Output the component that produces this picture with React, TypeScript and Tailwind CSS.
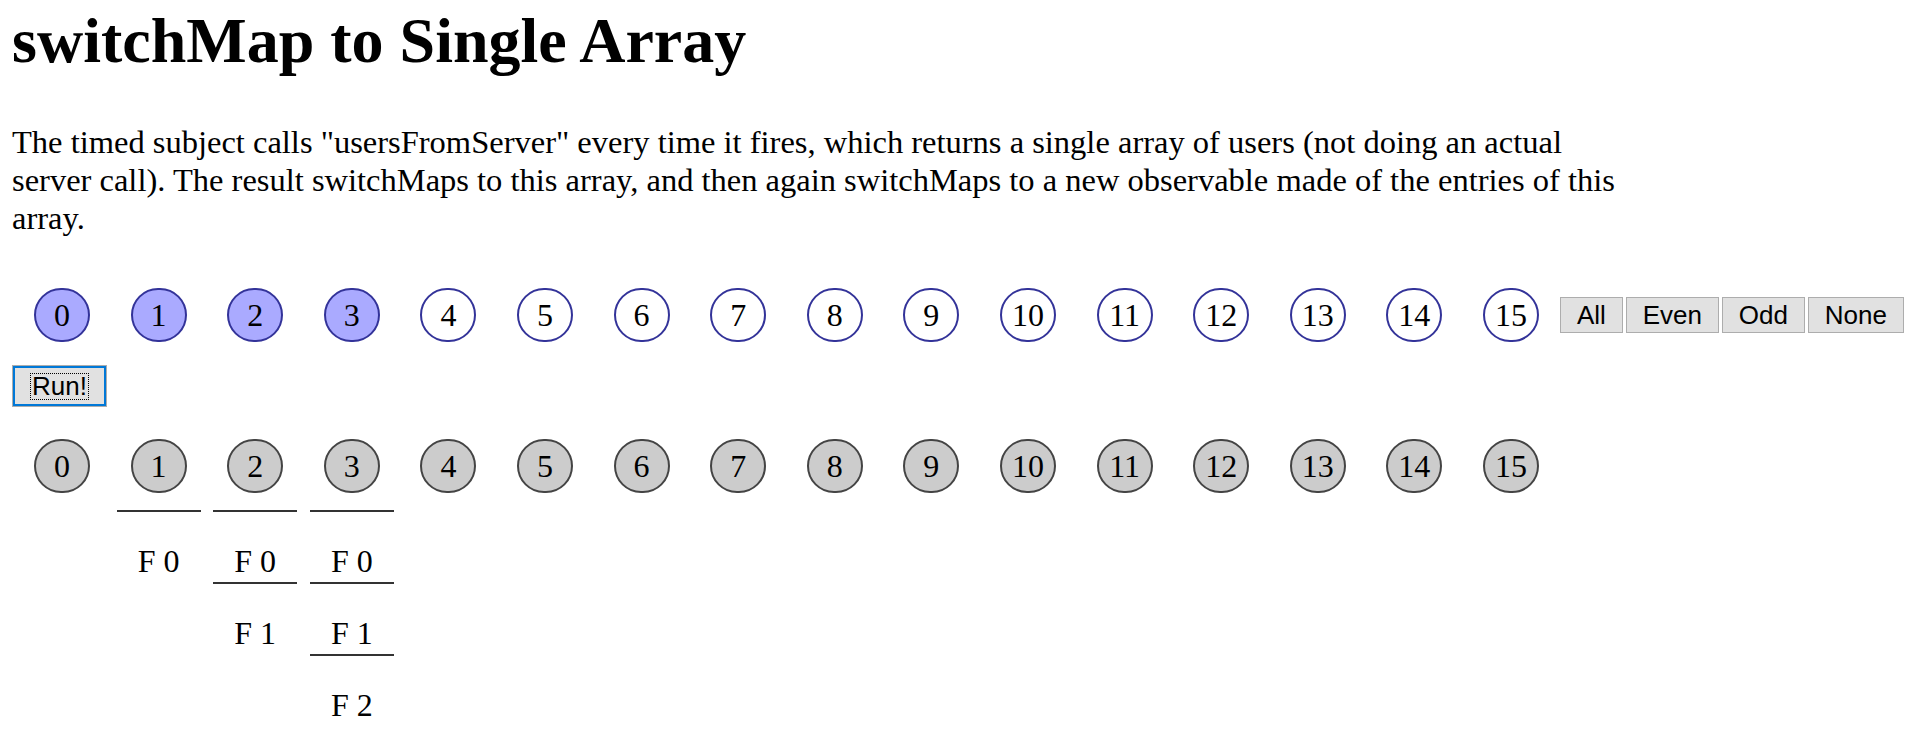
const selected = [0, 1, 2, 3];
const cells = Array.from({ length: 16 }, (_, i) => i);
const results: Record<number, string[]> = {
  1: ["F 0"],
  2: ["F 0", "F 1"],
  3: ["F 0", "F 1", "F 2"],
};

const serif = "font-['Liberation_Serif','Times_New_Roman',serif]";
const sans = "font-['Liberation_Sans',Arial,sans-serif]";

const App = () => {
  return (
    <div className={`${serif} text-black bg-white min-h-[742px] pl-3 pt-[5px]`}>
      <h1 className="text-[64px] font-bold leading-[71px]">
        switchMap to Single Array
      </h1>
      <p className="text-[32.5px] leading-[38px] mt-[47px] max-w-[1624px]">
        The timed subject calls "usersFromServer" every time it fires, which
        returns a single array of users (not doing an actual server call). The
        result switchMaps to this array, and then again switchMaps to a new
        observable made of the entries of this array.
      </p>

      <div className="flex items-center mt-[51px] pl-2">
        <div className="flex gap-[12.6px]">
          {cells.map((n) => (
            <div key={n} className="w-[84px] flex justify-center">
              <div
                className={`w-[56px] h-[54px] rounded-full border-2 border-[#333399] flex items-center justify-center text-[32px] ${
                  selected.includes(n) ? "bg-[#aaaaff]" : "bg-white"
                }`}
              >
                {n}
              </div>
            </div>
          ))}
        </div>
        <div className={`flex gap-[3px] ml-[7px] ${sans} text-[26px]`}>
          {["All", "Even", "Odd", "None"].map((b) => (
            <button
              key={b}
              className={`h-[36px] bg-[#e1e1e1] border border-[#adadad] flex items-center justify-center ${
                b === "All"
                  ? "w-[63px]"
                  : b === "Even"
                    ? "w-[93px]"
                    : b === "Odd"
                      ? "w-[83px]"
                      : "w-[96px]"
              }`}
            >
              {b}
            </button>
          ))}
        </div>
      </div>

      <div className="mt-[23px]">
        <button
          className={`w-[95px] h-[42px] border border-[#adadad] p-0 ${sans} text-[26px]`}
        >
          <span className="flex w-full h-full items-center justify-center border-2 border-[#0078d7] bg-[#e1e1e1]">
            <span className="border border-dotted border-black px-[1px] leading-[25px]">
              Run!
            </span>
          </span>
        </button>
      </div>

      <div className="flex gap-[12.6px] mt-[32px] pl-2">
        {cells.map((n) => (
          <div key={n} className="w-[84px] flex flex-col items-center">
            <div className="w-[56px] h-[54px] rounded-full border-2 border-[#444] bg-[#cccccc] flex items-center justify-center text-[32px]">
              {n}
            </div>
            <div className="w-full mt-[17px]">
              {(results[n] || []).map((r) => (
                <div
                  key={r}
                  className="h-[72px] border-t-2 border-[#333] pt-[31px] text-center text-[32px] leading-[37px]"
                >
                  {r}
                </div>
              ))}
            </div>
          </div>
        ))}
      </div>
    </div>
  );
};

export default App;
